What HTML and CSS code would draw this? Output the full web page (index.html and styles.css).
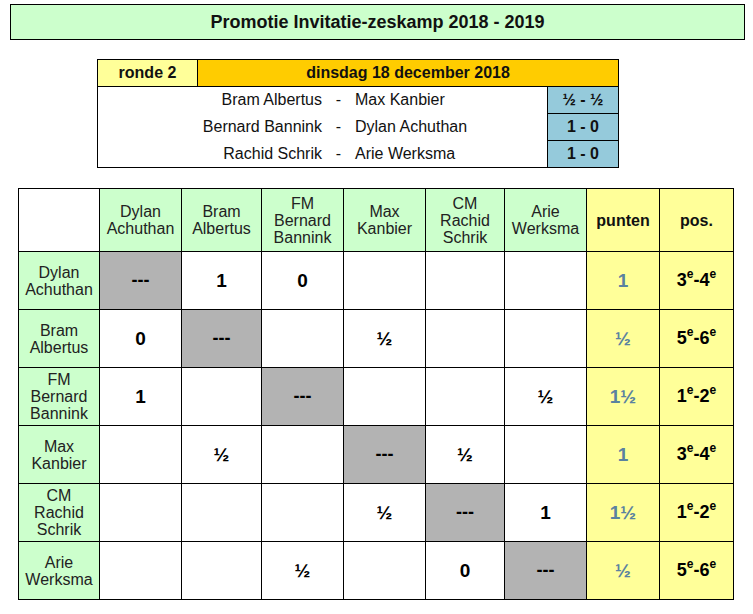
FILE: index.html
```html
<!DOCTYPE html>
<html lang="nl">
<head>
<meta charset="utf-8">
<title>Promotie Invitatie-zeskamp 2018 - 2019</title>
<link rel="stylesheet" href="styles.css">
</head>
<body>
<div class="page">
  <div class="title">Promotie Invitatie-zeskamp 2018 - 2019</div>

  <div class="round">
    <div class="round-label">ronde 2</div>
    <div class="round-date">dinsdag 18 december 2018</div>
    <div class="pairs">
      <span class="p-home">Bram Albertus</span><span class="p-dash">-</span><span class="p-away">Max Kanbier</span>
      <span class="p-home">Bernard Bannink</span><span class="p-dash">-</span><span class="p-away">Dylan Achuthan</span>
      <span class="p-home">Rachid Schrik</span><span class="p-dash">-</span><span class="p-away">Arie Werksma</span>
    </div>
    <div class="score score-1">½ - ½</div>
    <div class="score score-2">1 - 0</div>
    <div class="score score-3">1 - 0</div>
  </div>

  <div class="cross">
    <div class="c blank"></div>
    <div class="c head">Dylan<br>Achuthan</div>
    <div class="c head">Bram<br>Albertus</div>
    <div class="c head">FM<br>Bernard<br>Bannink</div>
    <div class="c head">Max<br>Kanbier</div>
    <div class="c head">CM<br>Rachid<br>Schrik</div>
    <div class="c head">Arie<br>Werksma</div>
    <div class="c tot-head">punten</div>
    <div class="c tot-head">pos.</div>

    <div class="c name">Dylan<br>Achuthan</div>
    <div class="c self">---</div>
    <div class="c res">1</div>
    <div class="c res">0</div>
    <div class="c res"></div>
    <div class="c res"></div>
    <div class="c res"></div>
    <div class="c pts">1</div>
    <div class="c pos">3<span class="sup">e</span>-4<span class="sup">e</span></div>

    <div class="c name">Bram<br>Albertus</div>
    <div class="c res">0</div>
    <div class="c self">---</div>
    <div class="c res"></div>
    <div class="c res">½</div>
    <div class="c res"></div>
    <div class="c res"></div>
    <div class="c pts">½</div>
    <div class="c pos">5<span class="sup">e</span>-6<span class="sup">e</span></div>

    <div class="c name">FM<br>Bernard<br>Bannink</div>
    <div class="c res">1</div>
    <div class="c res"></div>
    <div class="c self">---</div>
    <div class="c res"></div>
    <div class="c res"></div>
    <div class="c res">½</div>
    <div class="c pts">1½</div>
    <div class="c pos">1<span class="sup">e</span>-2<span class="sup">e</span></div>

    <div class="c name">Max<br>Kanbier</div>
    <div class="c res"></div>
    <div class="c res">½</div>
    <div class="c res"></div>
    <div class="c self">---</div>
    <div class="c res">½</div>
    <div class="c res"></div>
    <div class="c pts">1</div>
    <div class="c pos">3<span class="sup">e</span>-4<span class="sup">e</span></div>

    <div class="c name">CM<br>Rachid<br>Schrik</div>
    <div class="c res"></div>
    <div class="c res"></div>
    <div class="c res"></div>
    <div class="c res">½</div>
    <div class="c self">---</div>
    <div class="c res">1</div>
    <div class="c pts">1½</div>
    <div class="c pos">1<span class="sup">e</span>-2<span class="sup">e</span></div>

    <div class="c name">Arie<br>Werksma</div>
    <div class="c res"></div>
    <div class="c res"></div>
    <div class="c res">½</div>
    <div class="c res"></div>
    <div class="c res">0</div>
    <div class="c self">---</div>
    <div class="c pts">½</div>
    <div class="c pos">5<span class="sup">e</span>-6<span class="sup">e</span></div>
  </div>
</div>
</body>
</html>
```
FILE: styles.css
```css
html, body {
  margin: 0;
  padding: 0;
  background: #ffffff;
}

body {
  font-family: "Liberation Sans", Arial, sans-serif;
  color: #000000;
}

.page {
  width: 753px;
  height: 614px;
  padding-top: 4px;
  box-sizing: border-box;
}

.title {
  margin-left: 10px;
  width: 735px;
  height: 36px;
  box-sizing: border-box;
  border: 1px solid #000000;
  background: #ccffcc;
  display: flex;
  align-items: center;
  justify-content: center;
  font-size: 18px;
  font-weight: bold;
  color: #111111;
}

/* round block */
.round {
  margin-top: 19px;
  margin-left: 97px;
  width: 522px;
  box-sizing: border-box;
  border: 1px solid #000000;
  background: #000000;
  display: grid;
  grid-template-columns: 99px 349px 70px;
  grid-template-rows: 26px 26px 26px 26px;
  gap: 1px;
}

.round-label {
  background: #ffff99;
  display: flex;
  align-items: center;
  justify-content: center;
  font-size: 16px;
  font-weight: bold;
  color: #111111;
}

.round-date {
  grid-column: 2 / 4;
  background: #ffcc00;
  display: flex;
  align-items: center;
  justify-content: center;
  font-size: 16px;
  font-weight: bold;
  color: #111111;
}

.pairs {
  grid-column: 1 / 3;
  grid-row: 2 / 5;
  background: #ffffff;
  display: grid;
  grid-template-columns: 224px 33px 1fr;
  grid-template-rows: 26px 26px 26px;
  row-gap: 1px;
  font-size: 16px;
  color: #111111;
}

.pairs span {
  display: flex;
  align-items: center;
}

.p-home {
  justify-content: flex-end;
}

.p-dash {
  justify-content: center;
}

.p-away {
  justify-content: flex-start;
}

.score {
  grid-column: 3;
  background: #95cadb;
  display: flex;
  align-items: center;
  justify-content: center;
  font-size: 16px;
  font-weight: bold;
  color: #111111;
}

/* cross table */
.cross {
  margin-top: 20px;
  margin-left: 18px;
  width: 716px;
  box-sizing: border-box;
  border: 1px solid #000000;
  background: #000000;
  display: grid;
  grid-template-columns: 80px 81px 79px 81px 81px 78px 81px 72px 73px;
  grid-template-rows: 62px repeat(6, 57px);
  gap: 1px;
}

.c {
  display: flex;
  align-items: center;
  justify-content: center;
  text-align: center;
  background: #ffffff;
  font-size: 16px;
  line-height: 17px;
}

.blank {
  background: #ffffff;
}

.head,
.name {
  background: #ccffcc;
  color: #222222;
}

.tot-head {
  background: #ffff99;
  font-weight: bold;
  color: #111111;
}

.self {
  background: #b3b3b3;
  font-weight: bold;
  font-size: 18px;
}

.res {
  font-weight: bold;
  font-size: 19px;
}

.pts {
  background: #ffff99;
  font-weight: bold;
  font-size: 19px;
  color: #5a82a0;
}

.pos {
  background: #ffff99;
  font-weight: bold;
  font-size: 18px;
  color: #000000;
}

.sup {
  font-size: 12px;
  position: relative;
  top: -6px;
}
```
